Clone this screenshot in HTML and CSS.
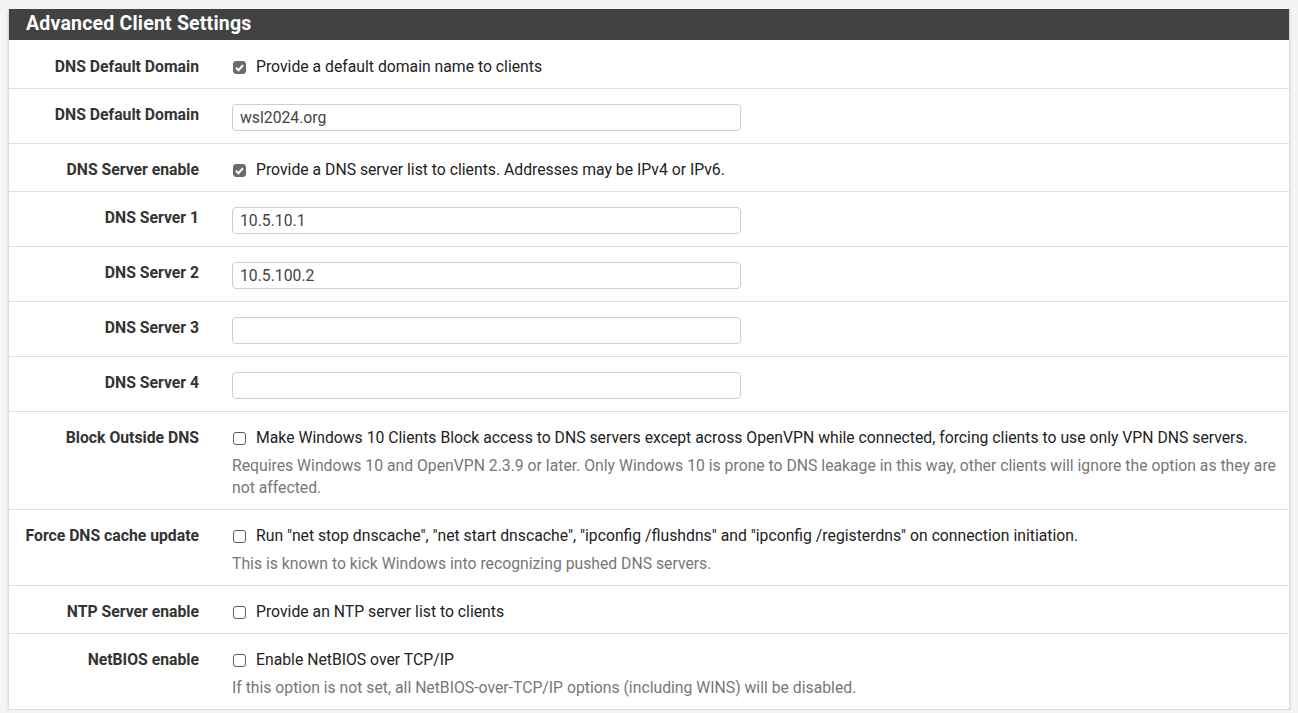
FILE: index.html
```html
<!DOCTYPE html>
<html>
<head>
<meta charset="utf-8">
<link rel="stylesheet" href="styles.css">
</head>
<body>
<div class="page">
  <div class="panel">
    <div class="panel-heading">Advanced Client Settings</div>
    <div class="panel-body">
      <div class="row">
        <div class="label">DNS Default Domain</div>
        <div class="content"><label class="check"><span class="box checked"><svg viewBox="0 0 13 13"><path d="M3 6.8 L5.4 9.2 L10 4.2" /></svg></span>Provide a default domain name to clients</label></div>
      </div>
      <div class="row field">
        <div class="label">DNS Default Domain</div>
        <div class="content"><div class="input">wsl2024.org</div></div>
      </div>
      <div class="row">
        <div class="label">DNS Server enable</div>
        <div class="content"><label class="check"><span class="box checked"><svg viewBox="0 0 13 13"><path d="M3 6.8 L5.4 9.2 L10 4.2" /></svg></span>Provide a DNS server list to clients. Addresses may be IPv4 or IPv6.</label></div>
      </div>
      <div class="row field">
        <div class="label">DNS Server 1</div>
        <div class="content"><div class="input">10.5.10.1</div></div>
      </div>
      <div class="row field">
        <div class="label">DNS Server 2</div>
        <div class="content"><div class="input">10.5.100.2</div></div>
      </div>
      <div class="row field">
        <div class="label">DNS Server 3</div>
        <div class="content"><div class="input"></div></div>
      </div>
      <div class="row field">
        <div class="label">DNS Server 4</div>
        <div class="content"><div class="input"></div></div>
      </div>
      <div class="row">
        <div class="label">Block Outside DNS</div>
        <div class="content">
          <label class="check"><span class="box"></span>Make Windows 10 Clients Block access to DNS servers except across OpenVPN while connected, forcing clients to use only VPN DNS servers.</label>
          <div class="help">Requires Windows 10 and OpenVPN 2.3.9 or later. Only Windows 10 is prone to DNS leakage in this way, other clients will ignore the option as they are not affected.</div>
        </div>
      </div>
      <div class="row">
        <div class="label">Force DNS cache update</div>
        <div class="content">
          <label class="check"><span class="box"></span>Run "net stop dnscache", "net start dnscache", "ipconfig /flushdns" and "ipconfig /registerdns" on connection initiation.</label>
          <div class="help">This is known to kick Windows into recognizing pushed DNS servers.</div>
        </div>
      </div>
      <div class="row">
        <div class="label">NTP Server enable</div>
        <div class="content"><label class="check"><span class="box"></span>Provide an NTP server list to clients</label></div>
      </div>
      <div class="row">
        <div class="label">NetBIOS enable</div>
        <div class="content">
          <label class="check"><span class="box"></span>Enable NetBIOS over TCP/IP</label>
          <div class="help">If this option is not set, all NetBIOS-over-TCP/IP options (including WINS) will be disabled.</div>
        </div>
      </div>
    </div>
  </div>
</div>
</body>
</html>
```

FILE: styles.css
```css
html, body {
  margin: 0;
  padding: 0;
  background: #f4f4f4;
  font-family: Roboto, "Liberation Sans", Arial, sans-serif;
  font-size: 15.75px;
  color: #222;
}
.page {
  padding: 9px 8px 0 8px;
}
.panel {
  background: #fff;
  border: 1px solid #dcdcdc;
  border-top: none;
  box-shadow: 0 2px 3px rgba(0,0,0,0.12);
}
.panel-heading {
  background: #424242;
  color: #fff;
  font-weight: 700;
  font-size: 19.5px;
  letter-spacing: 0.2px;
  height: 31px;
  line-height: 29px;
  padding-left: 17px;
}
.row {
  display: grid;
  grid-template-columns: 206px 1fr;
  border-top: 1px solid #dedede;
  padding: 15px 0 10px 0;
}
.row:first-child {
  border-top: none;
  padding-top: 16px;
}
.row.field {
  padding-bottom: 12px;
}
.label {
  text-align: right;
  padding-right: 16px;
  font-weight: 700;
  color: #333;
  line-height: 22px;
}
.content {
  padding-left: 17px;
  padding-right: 12px;
  line-height: 22px;
}
.check {
  display: flex;
  align-items: center;
}
.box {
  display: inline-block;
  flex: none;
  width: 11px;
  height: 11px;
  border: 1px solid #5c5c5c;
  border-radius: 3px;
  margin-left: 1px;
  margin-right: 10px;
  position: relative;
  background: #fff;
}
.box.checked {
  background: #6b6b6b;
  border-color: #6b6b6b;
}
.box svg {
  position: absolute;
  left: -1px;
  top: -1px;
  width: 13px;
  height: 13px;
  fill: none;
  stroke: #fff;
  stroke-width: 2;
}
.help {
  margin-top: 6px;
  color: #777;
  line-height: 22px;
}
.input {
  width: 493px;
  height: 25px;
  border: 1px solid #cfcfcf;
  border-radius: 4px;
  padding: 0 7px;
  line-height: 25px;
  color: #444;
}
```
